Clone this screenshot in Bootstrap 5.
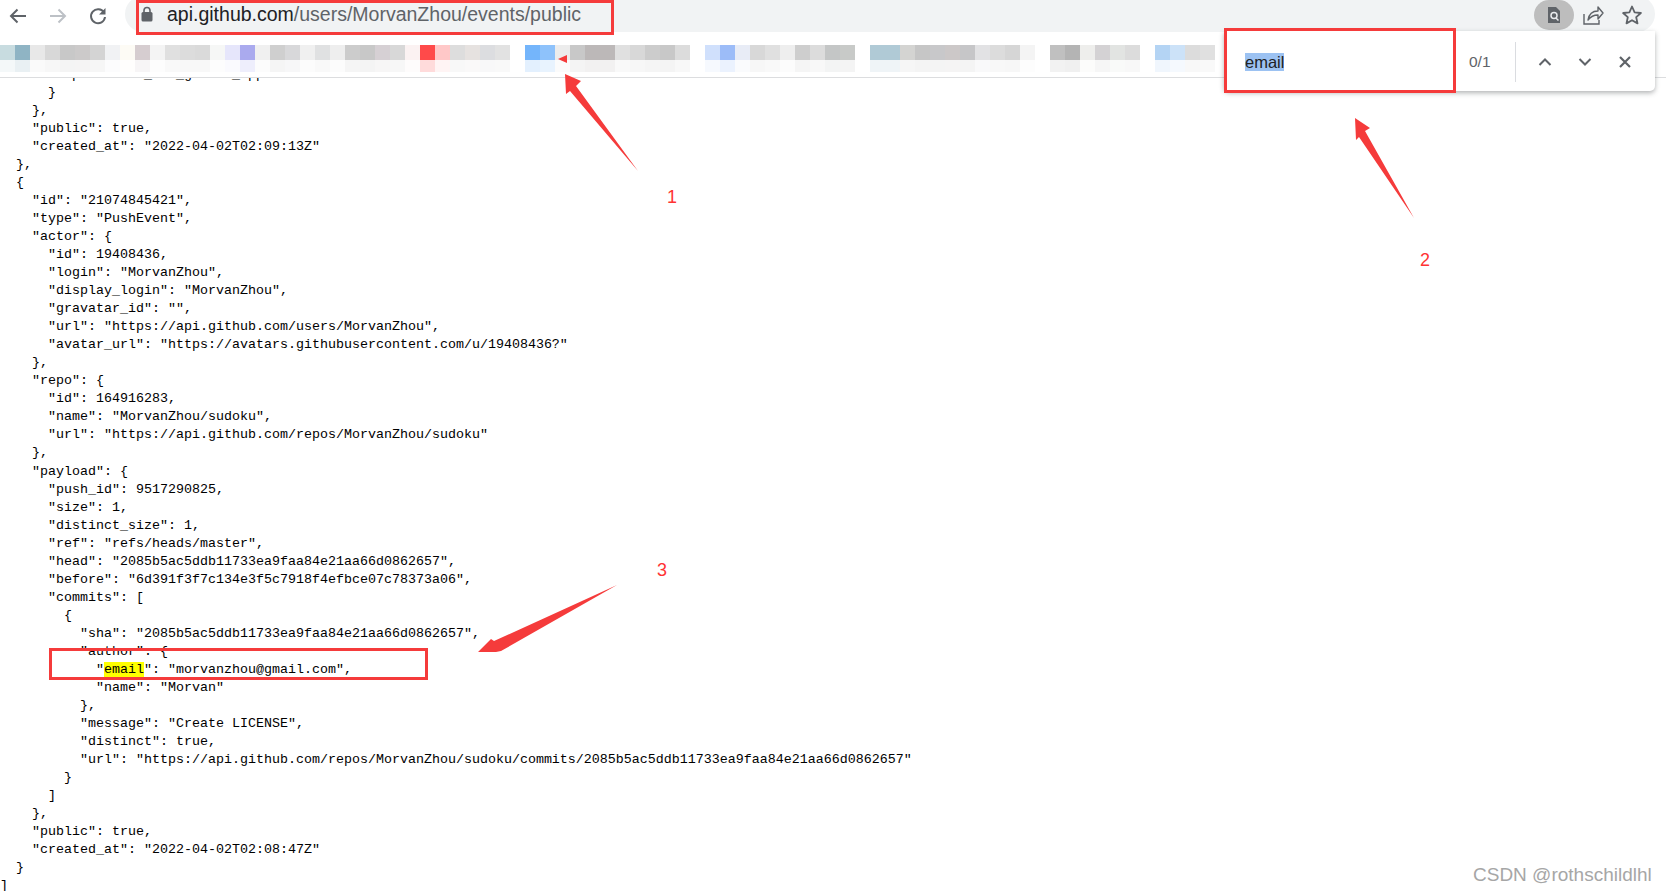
<!doctype html>
<html lang="en">
<head>
<meta charset="utf-8">
<title>api.github.com/users/MorvanZhou/events/public</title>
<link href="https://cdn.jsdelivr.net/npm/bootstrap@5.3.0/dist/css/bootstrap.min.css" rel="stylesheet">
<style>
html,body{height:891px;overflow:hidden;background:#fff}
.shot{position:relative;height:891px;overflow:hidden}
.toolbar{height:32px;position:relative;z-index:2;background:#fff}
.navset{width:125px;flex:none;padding-left:8px;gap:20px}
.navset svg{display:block}
.omni{flex:none;width:1530px;height:36px;margin-top:-4px;background:#f1f3f4;border-radius:18px;padding-left:15px;padding-right:12px}
.urltext{font:19.5px/36px "Liberation Sans",sans-serif;color:#5f6368;margin-left:13px;white-space:nowrap}
.urltext b{font-weight:400;color:#202124}
.lensbtn{width:40px;height:30px;margin-top:4px;border-radius:15px;background:#bdbdbd}
.starbtn{margin-left:9px}
.bmbar{height:46px;position:relative;z-index:2;background:#fff;border-bottom:1px solid #dcdddf;padding-top:13px}
.tile{width:15px;flex:none;display:flex;flex-direction:column}
.tile i{display:block;height:15px}
.tile i+i{height:12px}
.jsonview{margin:-12.2px 0 0;font:13.33px/18.03px "Liberation Mono",monospace;color:#000;overflow:hidden}
.jsonview mark{background:#ff0;padding:0;color:#000}
.findbar{position:absolute;z-index:4;left:1224px;top:31px;width:431px;height:60px;background:#fff;border-radius:0 0 5px 5px;box-shadow:0 2px 5px rgba(60,64,67,.4);padding-top:1px}
.findinput{width:245px;padding-left:21px;font:16.5px/20px "Liberation Sans",sans-serif;color:#202124}
.findinput span{background:#9cc2f2}
.findcount{width:46px;font:15.500px "Liberation Sans",sans-serif;color:#5f6368}
.finddiv{width:1px;height:40px;background:#dadce0}
.findctl{padding:0 10px 0 9px}
.redbox{position:absolute;z-index:5;border:3px solid #f53b3b}
.rb1{left:136px;top:0;width:478px;height:35px}
.rb2{left:1224px;top:28px;width:232px;height:65px}
.rb3{left:49px;top:648px;width:379px;height:32px}
.arrows{position:absolute;z-index:5;left:0;top:0}
.notenum{position:absolute;z-index:5;font:18px/20px "Liberation Sans",sans-serif;color:#f33}
.n1{left:667px;top:187px}
.n2{left:1420px;top:250px}
.n3{left:657px;top:560px}
.wmark{position:absolute;z-index:5;left:1473px;top:864px;font:19px/22px "Liberation Sans",sans-serif;color:#a6a6a6;white-space:nowrap}
</style>
</head>
<body>
<div class="shot">
  <div class="toolbar d-flex">
    <div class="navset d-flex align-items-center">
      <svg width="20" height="20" viewBox="0 0 20 20" fill="none" stroke="#5f6368" stroke-width="2"><path d="M18 10H3M9.500 3.500 3 10l6.500 6.500"/></svg>
      <svg width="20" height="20" viewBox="0 0 20 20" fill="none" stroke="#bdc1c6" stroke-width="2"><path d="M2 10h15M10.500 3.500 17 10l-6.500 6.500"/></svg>
      <svg width="20" height="20" viewBox="0 0 20 20"><path d="M16 6.500A7 7 0 1 0 17 11" fill="none" stroke="#5f6368" stroke-width="2"/><path d="M17.500 2v6.500H11z" fill="#5f6368"/></svg>
    </div>
    <div class="omni d-flex">
      <svg class="align-self-center" width="14" height="16" viewBox="0 0 14 16"><rect x="1.500" y="6" width="11" height="9.500" rx="1.500" fill="#5f6368"/><path d="M4 6.500V4.500a3 3 0 0 1 6 0v2" fill="none" stroke="#5f6368" stroke-width="1.600"/></svg>
      <div class="urltext flex-grow-1"><b>api.github.com</b>/users/MorvanZhou/events/public</div>
      <div class="d-flex gap-2 align-items-start">
        <div class="lensbtn d-flex align-items-center justify-content-center">
          <svg width="16" height="18" viewBox="0 0 16 18"><path d="M2 1h8l4 4v12H2z" fill="#5f6368"/><circle cx="8" cy="9.500" r="3" fill="none" stroke="#e8eaed" stroke-width="1.500"/><path d="M10 12l2.500 2.500" stroke="#e8eaed" stroke-width="1.500"/></svg>
        </div>
        <svg class="mt-2" width="22" height="22" viewBox="0 0 22 22" fill="none" stroke="#5f6368" stroke-width="1.400"><path d="M2 10v10h15v-4"/><path d="M6 16c1-6 5-9 10-9V3l5 6-5 6v-4c-4 0-7 1-10 5z" stroke-linejoin="round"/></svg>
        <svg class="mt-2 starbtn" width="22" height="22" viewBox="0 0 22 22" fill="none" stroke="#5f6368" stroke-width="1.800"><path d="M11 2.500l2.600 5.800 6.300.7-4.700 4.200 1.300 6.200L11 16.200l-5.500 3.200 1.300-6.200L2.100 9l6.300-.7z" stroke-linejoin="round"/></svg>
      </div>
    </div>
  </div>
  <div class="bmbar d-flex" id="bm"></div>
<pre class="jsonview">        "performed_via_github_app": null
      }
    },
    "public": true,
    "created_at": "2022-04-02T02:09:13Z"
  },
  {
    "id": "21074845421",
    "type": "PushEvent",
    "actor": {
      "id": 19408436,
      "login": "MorvanZhou",
      "display_login": "MorvanZhou",
      "gravatar_id": "",
      "url": "https://api.github.com/users/MorvanZhou",
      "avatar_url": "https://avatars.githubusercontent.com/u/19408436?"
    },
    "repo": {
      "id": 164916283,
      "name": "MorvanZhou/sudoku",
      "url": "https://api.github.com/repos/MorvanZhou/sudoku"
    },
    "payload": {
      "push_id": 9517290825,
      "size": 1,
      "distinct_size": 1,
      "ref": "refs/heads/master",
      "head": "2085b5ac5ddb11733ea9faa84e21aa66d0862657",
      "before": "6d391f3f7c134e3f5c7918f4efbce07c78373a06",
      "commits": [
        {
          "sha": "2085b5ac5ddb11733ea9faa84e21aa66d0862657",
          "author": {
            "<mark>email</mark>": "morvanzhou@gmail.com",
            "name": "Morvan"
          },
          "message": "Create LICENSE",
          "distinct": true,
          "url": "https://api.github.com/repos/MorvanZhou/sudoku/commits/2085b5ac5ddb11733ea9faa84e21aa66d0862657"
        }
      ]
    },
    "public": true,
    "created_at": "2022-04-02T02:08:47Z"
  }
]</pre>
  <div class="findbar d-flex align-items-center">
    <div class="findinput"><span>email</span></div>
    <div class="findcount">0/1</div>
    <div class="finddiv"></div>
    <div class="findctl d-flex align-items-center flex-grow-1 justify-content-around">
      <svg width="14" height="10" viewBox="0 0 14 10" fill="none" stroke="#5f6368" stroke-width="2"><path d="M1.500 8 7 2.500 12.500 8"/></svg>
      <svg width="14" height="10" viewBox="0 0 14 10" fill="none" stroke="#5f6368" stroke-width="2"><path d="M1.500 2 7 7.500 12.500 2"/></svg>
      <svg width="14" height="14" viewBox="0 0 14 14" fill="none" stroke="#5f6368" stroke-width="2.200"><path d="M2 2l10 10M12 2 2 12"/></svg>
    </div>
  </div>
  <div class="redbox rb1"></div>
  <div class="redbox rb2"></div>
  <div class="redbox rb3"></div>
  <svg class="arrows" width="1666" height="891" viewBox="0 0 1666 891" fill="#f53b3b">
    <path d="M558 59l9-4v8z"/>
    <path d="M565 74l16 7-5 5 62 85-68-80-4 3z"/>
    <path d="M1355 118l15 10-5 3 49 87-55-81-3 3z"/>
    <path d="M617 585 501 651l-5 1h-18l13-13 3 2z"/>
  </svg>
  <div class="notenum n1">1</div>
  <div class="notenum n2">2</div>
  <div class="notenum n3">3</div>
  <div class="wmark">CSDN @rothschildlhl</div>
</div>
<script>
var tiles="c8dce0 8fb4c4 e8e8e8 d8d8d8 c8c8c8 cccaca d4d4d4 f1f2f4 fdfbf5 d6cdd0 f4f4f4 e0e0e0 dcdcdc dadada f6f7f6 e6e6fb aaaaee f0f0f0 cfcfcf d8d8da f0f0f0 e0e1e2 eeeeee cccccc c8c8c8 d6d0d4 d8d8d8 fbf2f2 ff4a4a ffc8c8 dddddd e6e2e0 dcdde0 e2e2e2 - 74b5fb 8ec2fb ececec c8c8c8 bcb8b8 bcb8b8 e0e0e0 d8d8d8 cccccc c8c8c8 dcdcdc - d0e0fc 9cbcf8 e8ecf6 d8d8d8 e0e0e0 eeeeee cecece dcdcdc c4c6c6 c8cac8 - b0cad6 b0cad6 d4d4d2 c6c6c6 c8c8ca ccc8c8 c6c6c8 e2e2e4 dcdcdc d6d6d6 f4f4f4 - c0c0c0 b4b4b4 eeeeec d4d2d4 e2e4e2 dcdcdc - b4d4f4 cce2f8 dcdcdc e0e0e0".split(" ");
var bm=document.getElementById("bm");
tiles.forEach(function(c){
  var t=document.createElement("div");t.className="tile";
  if(c!=="-"){
    var n=parseInt(c,16),m=function(v){return Math.round(v+(255-v)*.8)};
    var lo="rgb("+m(n>>16)+","+m(n>>8&255)+","+m(n&255)+")";
    t.innerHTML='<i style="background:#'+c+'"></i><i style="background:'+lo+'"></i>';
  }
  bm.appendChild(t);
});
</script>
<script src="https://cdn.jsdelivr.net/npm/bootstrap@5.3.0/dist/js/bootstrap.bundle.min.js"></script>
</body>
</html>
